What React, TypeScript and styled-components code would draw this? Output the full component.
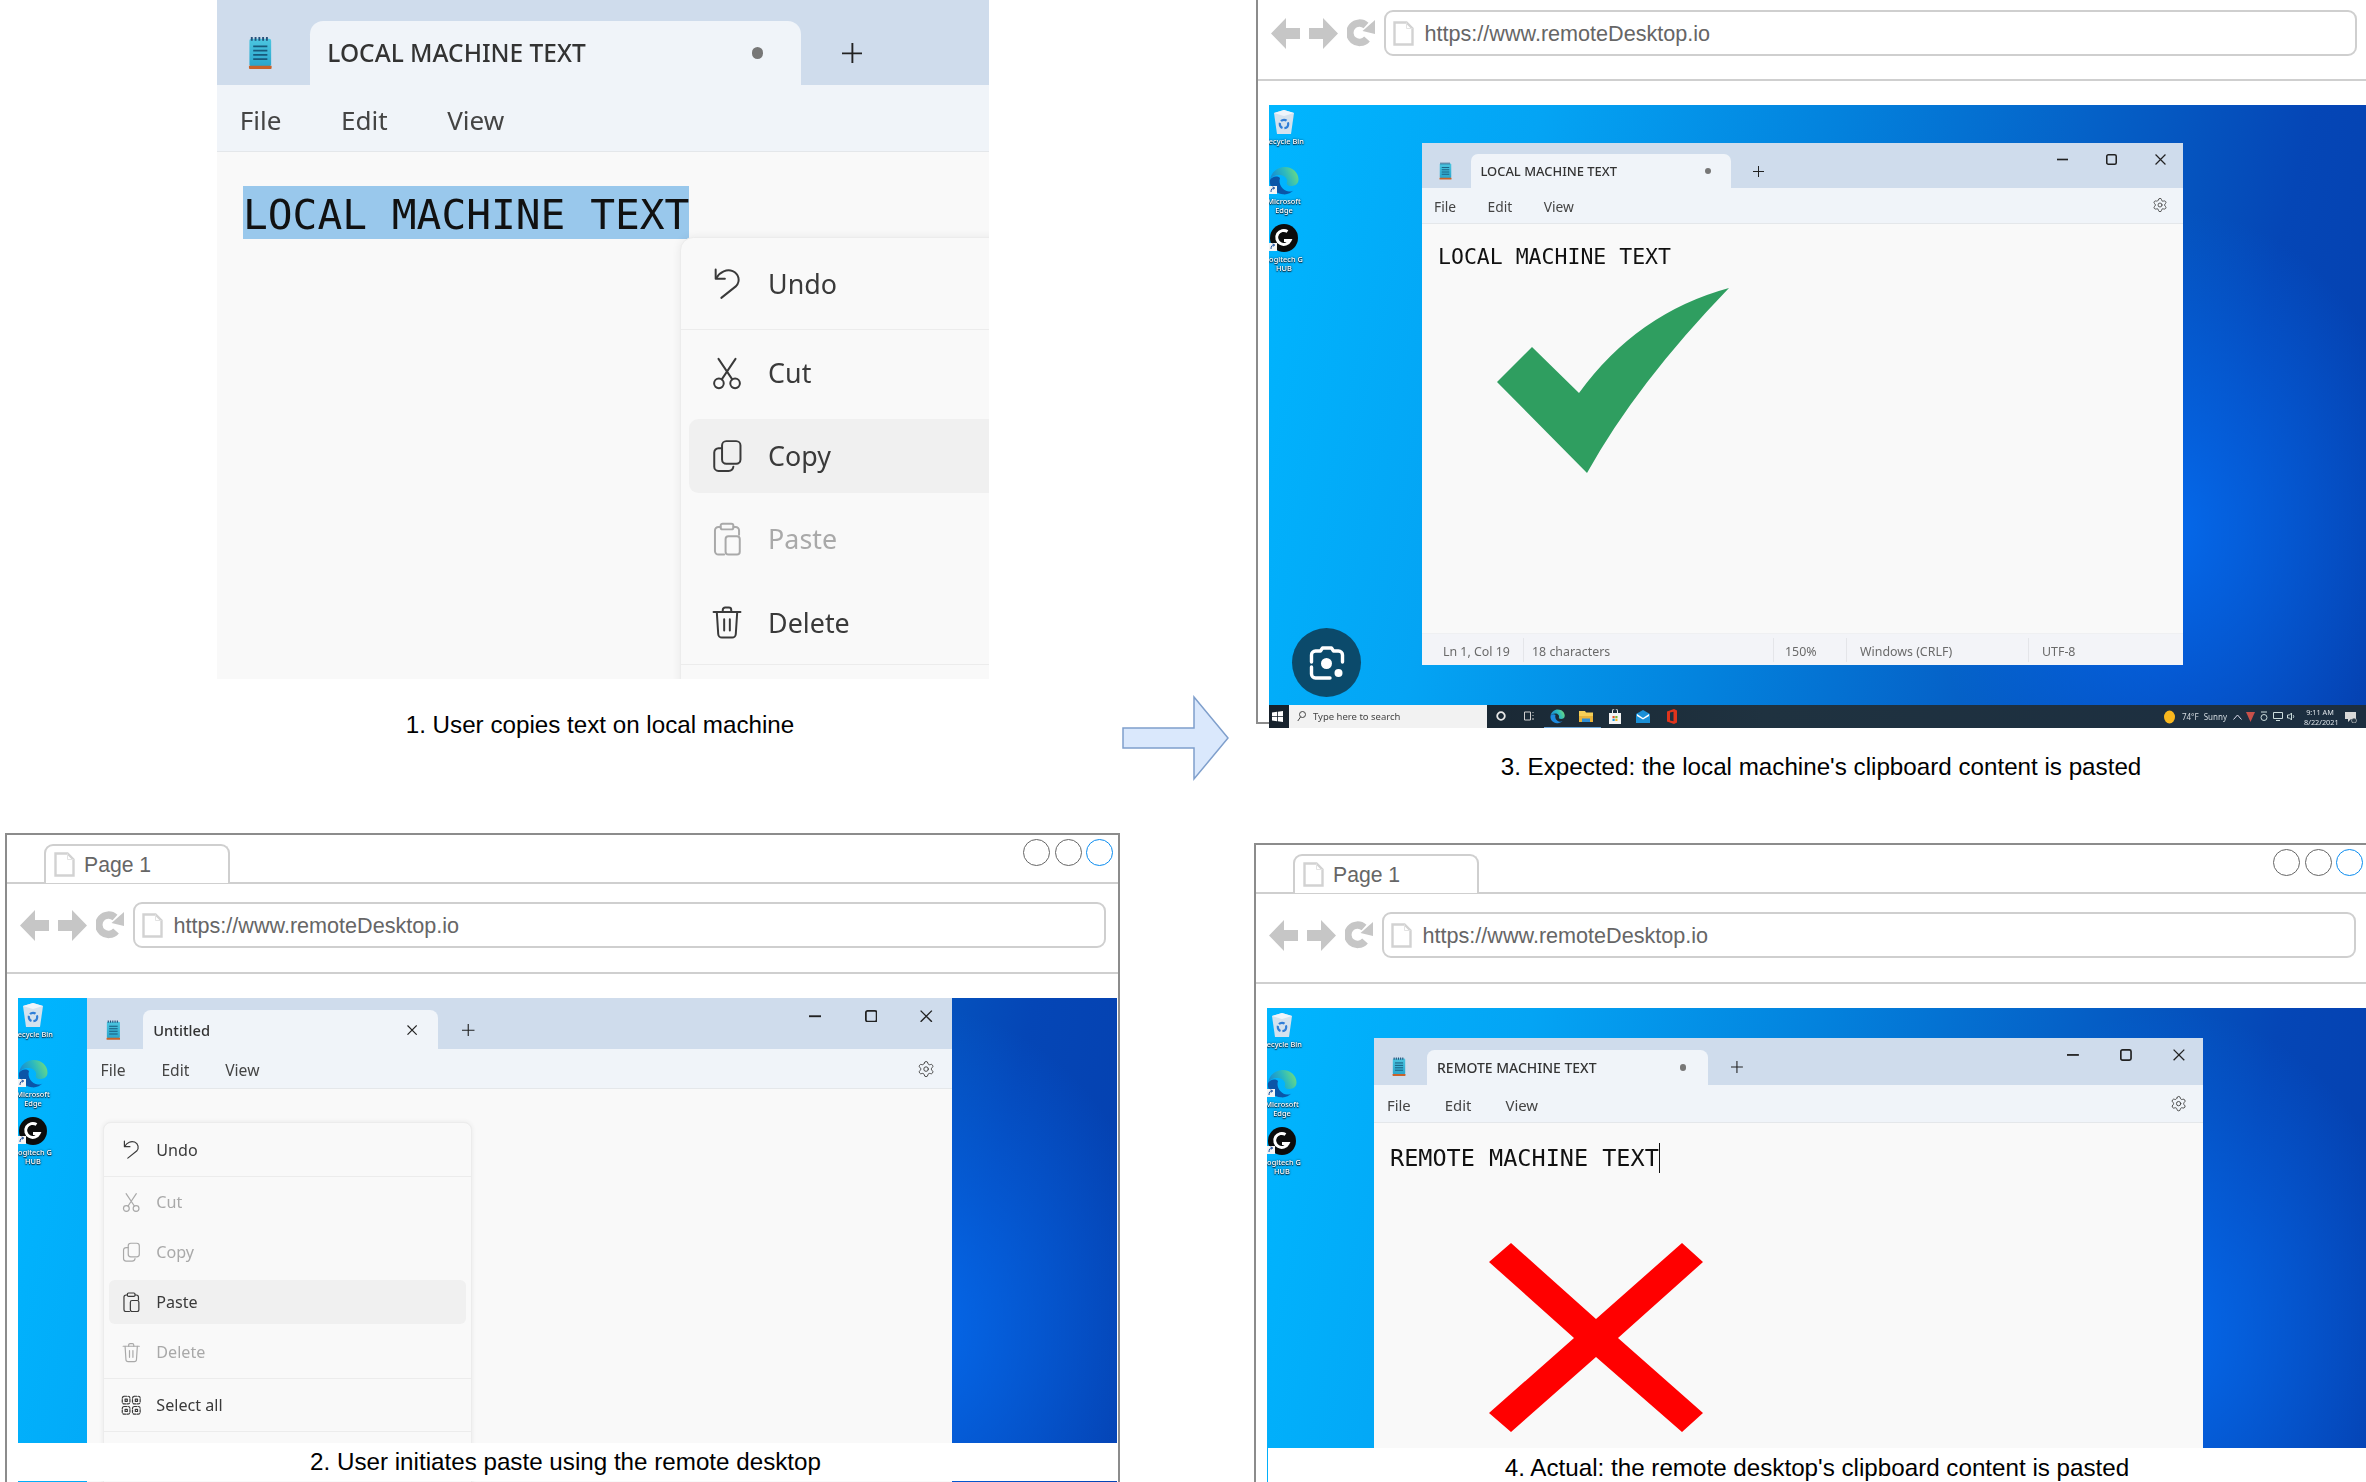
import React from "react";
import styled, { createGlobalStyle } from "styled-components";
import { Settings } from "lucide-react";

const Global = createGlobalStyle`
  html, body { margin: 0; padding: 0; background: #fff; }
  #root { width: 2366px; height: 1482px; overflow: hidden; }
`;

const SANS = `"Noto Sans", "Open Sans", sans-serif`;
const ARIAL = `"Liberation Sans", Arial, sans-serif`;

/* ---------- free canvas holding the four diagram steps ---------- */
const Canvas = styled.div`
  position: relative;
  width: 2366px;
  height: 1482px;
  overflow: hidden;
  background: #fff;
`;

const Caption = styled.div<{ $x: number; $y: number; $w: number; $h: number; $white?: boolean; $pr?: number; $pt?: number }>`
  position: absolute;
  left: ${(p) => p.$x}px;
  top: ${(p) => p.$y}px;
  width: ${(p) => p.$w}px;
  height: ${(p) => p.$h}px;
  box-sizing: border-box;
  padding: ${(p) => p.$pt ?? 0}px ${(p) => p.$pr ?? 0}px 0 0;
  display: flex;
  align-items: center;
  justify-content: center;
  background: ${(p) => (p.$white ? "#fff" : "transparent")};
  font: 24.2px ${ARIAL};
  color: #000;
  white-space: nowrap;
`;

const ArrowShape = styled.svg`
  position: absolute;
  left: 1121px;
  top: 695px;
`;

/* ---------- browser mock ---------- */
const Browser = styled.div<{ $x: number; $y: number; $w: number; $h: number; $open?: boolean }>`
  position: absolute;
  left: ${(p) => p.$x}px;
  top: ${(p) => p.$y}px;
  width: ${(p) => p.$w}px;
  height: ${(p) => p.$h}px;
  box-sizing: border-box;
  border: 2px solid #8c8c8c;
  border-top-width: ${(p) => (p.$open ? 0 : 2)}px;
  background: #fff;
  display: flex;
  flex-direction: column;
`;

const TabStrip = styled.div`
  flex: none;
  height: 49px;
  box-sizing: border-box;
  border-bottom: 2px solid #cfcfcf;
  padding: 4px 5px 0 37px;
  display: flex;
  align-items: flex-start;
  justify-content: space-between;
`;

const PageTab = styled.div`
  width: 186px;
  height: 39px;
  margin-top: 5px;
  box-sizing: border-box;
  border: 2px solid #cfcfcf;
  border-bottom: none;
  border-radius: 9px 9px 0 0;
  background: #fff;
  padding: 6px 0 0 8px;
  display: flex;
  align-items: flex-start;
  gap: 9px;
  font: 21.2px/25px ${ARIAL};
  color: #666;
`;

const Circles = styled.div`
  display: flex;
  gap: 4.5px;
`;

const Circle = styled.span<{ $blue?: boolean }>`
  width: 27px;
  height: 27px;
  box-sizing: border-box;
  border-radius: 50%;
  border: 1.5px solid ${(p) => (p.$blue ? "#0a8cf0" : "#666")};
`;

const AddressRow = styled.div<{ $compact?: boolean }>`
  flex: none;
  height: ${(p) => (p.$compact ? 81 : 90)}px;
  box-sizing: border-box;
  border-bottom: 2px solid #cfcfcf;
  padding: ${(p) => (p.$compact ? 10 : 18)}px 12px 0 13px;
  display: flex;
  align-items: flex-start;
`;

const NavGroup = styled.div`
  flex: none;
  display: flex;
  align-items: center;
  gap: 9px;
  height: 46px;
  margin-right: 9px;
`;

const AddressBar = styled.div`
  flex: 1;
  height: 46px;
  box-sizing: border-box;
  border: 2px solid #cfcfcf;
  border-radius: 9px;
  padding-left: 7px;
  display: flex;
  align-items: center;
  gap: 10.5px;
  font: 21.6px ${ARIAL};
  color: #666;
`;

const AddressText = styled.span`
  padding-top: 1px;
`;

const Viewport = styled.div`
  flex: 1;
  padding: 24px 1px 0 11px;
  min-height: 0;
`;

/* ---------- windows desktop ---------- */
const Desktop = styled.div<{ $h: number }>`
  position: relative;
  height: ${(p) => p.$h}px;
  overflow: hidden;
  filter: blur(0.35px);
  display: flex;
  flex-direction: column;
  background:
    radial-gradient(ellipse 250px 320px at 82% 68%, rgba(5, 108, 240, 0.9), rgba(5, 108, 240, 0) 100%),
    linear-gradient(103deg, #00b6ff 0%, #04a4f4 22%, #0382dd 46%, #0562c8 66%, #0546b6 84%, #053fae 100%);
`;

const IconColumn = styled.div`
  flex: none;
  width: 36px;
  margin-left: -3px;
  display: flex;
  flex-direction: column;
  align-items: center;
`;

const DeskItem = styled.div<{ $top: number }>`
  margin-top: ${(p) => p.$top}px;
  display: flex;
  flex-direction: column;
  align-items: center;
  font: 500 7.4px/9px ${SANS};
  color: #fff;
  text-align: center;
  white-space: nowrap;
  text-shadow: 0 0 2px #123, 0 1px 1px #123;
`;

const DeskLabel = styled.div<{ $top: number }>`
  margin-top: ${(p) => p.$top}px;
`;

const LensButton = styled.div`
  position: absolute;
  left: 23px;
  top: 523px;
  width: 69px;
  height: 69px;
  border-radius: 50%;
  background: #0b4a6b;
  display: flex;
  align-items: center;
  justify-content: center;
`;

const Taskbar = styled.div`
  margin-top: auto;
  flex: none;
  height: 23px;
  background: linear-gradient(90deg, #16212c, #1f3240 45%, #1c2e40);
  display: flex;
  align-items: center;
`;

const StartCell = styled.div`
  width: 20px;
  height: 23px;
  padding-right: 3px;
  box-sizing: border-box;
  display: flex;
  align-items: center;
  justify-content: center;
`;

const SearchBox = styled.div`
  width: 198px;
  height: 23px;
  box-sizing: border-box;
  background: #f2f2f2;
  padding-left: 8px;
  display: flex;
  align-items: center;
  gap: 7px;
  font: 9.5px ${SANS};
  color: #444;
`;

const TaskCell = styled.div<{ $active?: boolean }>`
  position: relative;
  width: 28.4px;
  height: 23px;
  display: flex;
  align-items: center;
  justify-content: center;
  box-sizing: border-box;
  border-bottom: 1.5px solid ${(p) => (p.$active ? "#6aa5d8" : "transparent")};
`;

const Tray = styled.div`
  margin-left: auto;
  padding-right: 11px;
  display: flex;
  align-items: center;
  height: 23px;
  color: #d4dbe0;
  font: 8px ${SANS};
`;

const TrayText = styled.span<{ $ml: number }>`
  margin-left: ${(p) => p.$ml}px;
  white-space: nowrap;
`;

const TrayClock = styled.div`
  margin: 0 9px 0 8px;
  width: 32px;
  text-align: center;
  font: 7.3px/10px ${SANS};
  color: #dde3e8;
`;

/* ---------- notepad window, every length scaled by --s (--v for bar heights) ---------- */
const Window = styled.div<{ $x: number; $y: number; $w: number; $h: number; $s: number; $v?: number; $blur?: boolean }>`
  --s: ${(p) => p.$s};
  --v: ${(p) => p.$v ?? p.$s};
  position: absolute;
  left: ${(p) => p.$x}px;
  top: ${(p) => p.$y}px;
  width: ${(p) => p.$w}px;
  height: ${(p) => p.$h}px;
  overflow: hidden;
  background: #f9f9f9;
  display: flex;
  flex-direction: column;
  font-family: ${SANS};
  filter: ${(p) => (p.$blur ? "blur(0.45px)" : "none")};
`;

const TitleBar = styled.div`
  flex: none;
  height: calc(var(--v) * 45px);
  box-sizing: border-box;
  background: #cfdcec;
  padding-left: calc(var(--s) * 16.5px);
  display: flex;
  align-items: flex-end;
`;

const NoteIcon = styled.svg`
  flex: none;
  width: calc(var(--s) * 13px);
  height: calc(var(--s) * 18px);
  margin: 0 calc(var(--s) * 19.5px) calc(var(--v) * 8px) 0;
`;

const DocTab = styled.div`
  flex: none;
  width: calc(var(--s) * 260px);
  height: calc(var(--v) * 34px);
  box-sizing: border-box;
  background: #f0f4f9;
  border-radius: calc(var(--s) * 7px) calc(var(--s) * 7px) 0 0;
  padding: 0 calc(var(--s) * 17px) 0 calc(var(--s) * 9.4px);
  display: flex;
  align-items: center;
  justify-content: space-between;
  font-size: calc(var(--s) * 12.95px);
  font-weight: 500;
  color: #333;
`;

const TabSlot = styled.span`
  width: calc(var(--s) * 12px);
  height: calc(var(--s) * 12px);
  display: flex;
  align-items: center;
  justify-content: center;
`;

const TabDot = styled.span`
  width: calc(var(--s) * 6px);
  height: calc(var(--s) * 6px);
  border-radius: 50%;
  background: #777;
`;

const ThinIcon = styled.svg<{ $size: number }>`
  flex: none;
  width: calc(var(--s) * ${(p) => p.$size}px);
  height: calc(var(--s) * ${(p) => p.$size}px);
  fill: none;
  stroke: #222;
  stroke-width: 1.2;
`;

const PlusCell = styled.div`
  flex: none;
  margin: 0 0 calc(var(--v) * 11.5px) calc(var(--s) * 21.5px);
  display: flex;
`;

const Controls = styled.div`
  margin: 0 calc(var(--s) * -2px) 0 auto;
  align-self: flex-start;
  display: flex;
`;

const ControlCell = styled.div`
  width: calc(var(--s) * 49px);
  height: calc(var(--v) * 32px);
  display: flex;
  align-items: center;
  justify-content: center;
`;

const MenuBar = styled.div`
  flex: none;
  height: calc(var(--v) * 35.5px);
  box-sizing: border-box;
  background: #f0f4f9;
  border-bottom: 1px solid #e4e7ea;
  padding: calc(var(--s) * 2.2px) calc(var(--s) * 15px) 0 calc(var(--s) * 12px);
  display: flex;
  align-items: center;
  gap: calc(var(--s) * 31.5px);
  font-size: calc(var(--s) * 13.8px);
  color: #444;
`;

const GearCell = styled.span`
  margin-left: auto;
  display: flex;
  color: #444;
  margin-top: calc(var(--s) * -2px);
  & > svg {
    width: calc(var(--s) * 16px);
    height: calc(var(--s) * 16px);
  }
`;

const Editor = styled.div<{ $pt: number; $pl: number }>`
  flex: 1;
  min-height: 0;
  padding: ${(p) => p.$pt}px 0 0 ${(p) => p.$pl}px;
`;

const Typed = styled.span<{ $size: number; $lh: number; $nudge?: number; $selected?: boolean; $caret?: boolean }>`
  display: inline-block;
  font-family: "DejaVu Sans Mono", "Liberation Mono", monospace;
  font-size: ${(p) => p.$size}px;
  line-height: ${(p) => p.$lh - (p.$nudge ?? 0)}px;
  padding-top: ${(p) => p.$nudge ?? 0}px;
  color: #111;
  white-space: pre;
  background: ${(p) => (p.$selected ? "#99c8ec" : "transparent")};
  border-right: ${(p) => (p.$caret ? "1.5px solid #111" : "none")};
`;

const StatusBar = styled.div`
  flex: none;
  height: 32px;
  box-sizing: border-box;
  background: #f3f4f8;
  border-top: 1px solid #eff0f2;
  display: flex;
  align-items: center;
  font-size: 12.4px;
  color: #6a6a6a;
`;

const StatusCell = styled.div<{ $w: number; $pl: number; $rule?: boolean }>`
  width: ${(p) => p.$w}px;
  height: 24px;
  box-sizing: border-box;
  padding: 3px 0 0 ${(p) => p.$pl}px;
  display: flex;
  align-items: center;
  border-right: ${(p) => (p.$rule ? "1px solid #e4e5e9" : "none")};
`;

const Verdict = styled.svg<{ $x: number; $y: number }>`
  position: absolute;
  left: ${(p) => p.$x}px;
  top: ${(p) => p.$y}px;
`;

/* ---------- context menu ---------- */
const Menu = styled.div<{ $x: number; $y: number; $w: number }>`
  position: absolute;
  left: ${(p) => p.$x}px;
  top: ${(p) => p.$y}px;
  width: ${(p) => p.$w}px;
  box-sizing: border-box;
  background: #f9f9f9;
  border: 1px solid #ececec;
  border-radius: calc(var(--s) * 7px);
  box-shadow: 0 0 calc(var(--s) * 5px) rgba(0, 0, 0, 0.07);
  padding-bottom: 400px;
`;

const MenuRow = styled.div<{ $hot?: boolean; $off?: boolean; $h: number; $rule?: boolean; $mt?: number }>`
  height: calc(var(--s) * ${(p) => p.$h}px);
  margin-top: calc(var(--s) * ${(p) => p.$mt ?? 0}px);
  box-sizing: border-box;
  display: flex;
  align-items: center;
  color: ${(p) => (p.$off ? "#a9a9a9" : "#3a3a3a")};
  font-size: calc(var(--s) * 14.2px);
  padding-left: calc(var(--s) * 15.3px);
  gap: calc(var(--s) * 12.8px);
  position: relative;
  border-bottom: ${(p) => (p.$rule ? "1.5px solid #ececec" : "none")};
  &::before {
    content: "";
    display: ${(p) => (p.$hot ? "block" : "none")};
    position: absolute;
    left: calc(var(--s) * 4.3px);
    right: calc(var(--s) * 4.3px);
    top: calc(var(--s) * 2.5px);
    bottom: calc(var(--s) * 2.5px);
    border-radius: calc(var(--s) * 5px);
    background: #f0f0f0;
  }
  & > * {
    position: relative;
  }
`;

const MenuGlyph = styled.svg`
  flex: none;
  width: calc(var(--s) * 18px);
  height: calc(var(--s) * 18px);
  fill: none;
  stroke: currentColor;
  stroke-width: 1.4;
  stroke-linecap: round;
  stroke-linejoin: round;
`;

/* ---------- drawings ---------- */
const NotepadGlyph = () => (
  <NoteIcon viewBox="0 0 26 36">
    <defs>
      <linearGradient id="npBody" x1="0" x2="0" y1="0" y2="1">
        <stop offset="0" stopColor="#4cc6e0" />
        <stop offset="1" stopColor="#2aa5cc" />
      </linearGradient>
    </defs>
    <rect x="1.5" y="3" width="23" height="29" rx="2" fill="url(#npBody)" />
    <path d="M4 1v4M8 1v4M12 1v4M16 1v4M20 1v4" stroke="#24507a" strokeWidth="2" />
    <path d="M5.5 11h15M5.5 15.5h15M5.5 20h15M5.5 24.5h15" stroke="#175a7c" strokeWidth="1.8" />
    <path d="M1 31.5h24v2.5a1 1 0 0 1-1 1H2a1 1 0 0 1-1-1z" fill="#c8622a" />
  </NoteIcon>
);

const XGlyph = ({ size }: { size: number }) => (
  <ThinIcon $size={size} viewBox="0 0 10 10">
    <path d="M.5.5l9 9M9.5.5l-9 9" strokeWidth="1.1" />
  </ThinIcon>
);

const PlusGlyph = () => (
  <ThinIcon $size={11} viewBox="0 0 11 11">
    <path d="M5.5 0v11M0 5.5h11" strokeWidth="1" />
  </ThinIcon>
);

const WindowControls = () => (
  <Controls>
    <ControlCell>
      <ThinIcon $size={11} viewBox="0 0 10 10">
        <path d="M0 5h10" strokeWidth="1.5" />
      </ThinIcon>
    </ControlCell>
    <ControlCell>
      <ThinIcon $size={11} viewBox="0 0 10 10">
        <rect x=".7" y=".7" width="8.6" height="8.6" rx="1.4" strokeWidth="1.4" />
      </ThinIcon>
    </ControlCell>
    <ControlCell>
      <XGlyph size={11} />
    </ControlCell>
  </Controls>
);

const UndoIcon = () => (
  <MenuGlyph viewBox="0 0 24 24">
    <path d="M4 2.5V9h6.5" />
    <path d="M4.5 8.5C7 4 12 2 16 3.6c4.4 1.9 5.6 7 2.4 10.6L8 22.5" />
  </MenuGlyph>
);
const CutIcon = () => (
  <MenuGlyph viewBox="0 0 24 24">
    <circle cx="6.3" cy="19.3" r="3.4" />
    <circle cx="17.7" cy="19.3" r="3.4" />
    <path d="M8.3 16.5 18 2M15.7 16.5 6 2" />
  </MenuGlyph>
);
const CopyIcon = () => (
  <MenuGlyph viewBox="0 0 24 24">
    <rect x="8.5" y="1.5" width="13" height="16" rx="3" />
    <path d="M8.5 6.5H6A3 3 0 0 0 3 9.5v10a3 3 0 0 0 3 3h7a3.5 3.5 0 0 0 3.5-3" />
  </MenuGlyph>
);
const PasteIcon = () => (
  <MenuGlyph viewBox="0 0 24 24">
    <rect x="7.5" y="1.2" width="9" height="4" rx="1.4" />
    <path d="M7.5 3.5H6A2.5 2.5 0 0 0 3.5 6v14.5A2.5 2.5 0 0 0 6 23h4" />
    <path d="M16.5 3.5H18A2.5 2.5 0 0 1 20.5 6v3" />
    <rect x="11" y="10" width="10" height="13" rx="2" />
  </MenuGlyph>
);
const DeleteIcon = () => (
  <MenuGlyph viewBox="0 0 24 24">
    <path d="M2.5 5h19" />
    <path d="M9 5V3.5A1.7 1.7 0 0 1 10.7 1.8h2.6A1.7 1.7 0 0 1 15 3.5V5" />
    <path d="M4.8 5l1 15.5A2.6 2.6 0 0 0 8.4 23h7.2a2.6 2.6 0 0 0 2.6-2.5L19.2 5" />
    <path d="M10 10v8M14 10v8" />
  </MenuGlyph>
);
const SelectAllIcon = () => (
  <MenuGlyph viewBox="0 0 24 24">
    <rect x="1.5" y="1.5" width="9" height="9" rx="2.2" strokeDasharray="3 1.6" />
    <rect x="13.5" y="1.5" width="9" height="9" rx="2.2" strokeDasharray="3 1.6" />
    <rect x="1.5" y="13.5" width="9" height="9" rx="2.2" strokeDasharray="3 1.6" />
    <rect x="13.5" y="13.5" width="9" height="9" rx="2.2" strokeDasharray="3 1.6" />
    <rect x="4.8" y="4.8" width="2.6" height="2.6" />
    <rect x="16.8" y="4.8" width="2.6" height="2.6" />
    <rect x="4.8" y="16.8" width="2.6" height="2.6" />
    <rect x="16.8" y="16.8" width="2.6" height="2.6" />
  </MenuGlyph>
);

const DocIcon = () => (
  <svg width="21" height="25" viewBox="0 0 21 25" style={{ flex: "none" }}>
    <path d="M1.5 1.5h12l6 6v16h-18z" fill="#fff" stroke="#d2d2d2" strokeWidth="2.4" />
    <path d="M13.5 1.5v6h6" fill="none" stroke="#e3e3e3" strokeWidth="1" />
  </svg>
);

const NavIcons = () => (
  <NavGroup>
    <svg width="29" height="31" viewBox="0 0 29 31">
      <path d="M0 15.5 15 0v10h14v11H15v10z" fill="#c6c6c6" />
    </svg>
    <svg width="29" height="31" viewBox="0 0 29 31">
      <path d="M29 15.5 14 0v10H0v11h14v10z" fill="#c6c6c6" />
    </svg>
    <svg width="28" height="30" viewBox="0 0 28 30">
      <path d="M20 21A9.7 9.7 0 1 1 19 7.5" fill="none" stroke="#c6c6c6" strokeWidth="7.4" />
      <path d="M15.5 13 28 16V2z" fill="#c6c6c6" />
    </svg>
  </NavGroup>
);

const RecycleBin = () => (
  <svg width="24" height="26" viewBox="0 0 24 26">
    <path d="M2 4 12 1l10 3-3 21H5z" fill="#d4e2ee" />
    <path d="M2 4l10 3 10-3-10-3z" fill="#eef5fb" />
    <circle cx="12" cy="15" r="4.2" fill="none" stroke="#2f7ed8" strokeWidth="2.2" strokeDasharray="6 2" />
  </svg>
);

const Shortcut = () => (
  <>
    <rect x="0" y="19" width="8" height="8" fill="#f4f4f4" />
    <path d="M2 25c0-3 1-4 3-4M3.6 19.8 5.8 21l-2 1.4" fill="none" stroke="#1a4fa0" strokeWidth="1" />
  </>
);

const EdgeLogo = () => (
  <svg width="30" height="28" viewBox="0 0 30 28">
    <defs>
      <linearGradient id="edgeTop" x1="0" x2="1" y1="0.6" y2="0.3">
        <stop offset="0" stopColor="#1586d4" />
        <stop offset="0.55" stopColor="#2bb8c0" />
        <stop offset="1" stopColor="#6fdc7f" />
      </linearGradient>
    </defs>
    <path d="M1 13C2 5 9 0 15.500 0 24 0 29.500 6 29.500 12.500c0 4.500-3.500 6.500-7.500 6.500-3.500 0-5-2-4-4 1-3-2.500-7-7-7C6 8 2 10 1 13z" fill="url(#edgeTop)" />
    <path d="M1 13c2-3.500 7-4.500 10-2-2 6 2.500 13 9 13.500 2 .2 3.500-.3 5-1.500-3 3.200-7 4.800-11 4.300C6 26.500 0 21 1 13z" fill="#0b55a8" />
    <Shortcut />
  </svg>
);

const LogiLogo = () => (
  <svg width="30" height="28" viewBox="0 0 30 28">
    <circle cx="15" cy="14" r="14" fill="#0c0c0c" />
    <path d="M18.500 7.500A7 7 0 1 0 21 16.500h-6" fill="none" stroke="#fff" strokeWidth="3" />
    <Shortcut />
  </svg>
);

const DesktopIcons = () => (
  <IconColumn>
    <DeskItem $top={4}>
      <RecycleBin />
      <DeskLabel $top={2}>Recycle Bin</DeskLabel>
    </DeskItem>
    <DeskItem $top={20.5}>
      <EdgeLogo />
      <DeskLabel $top={2.5}>Microsoft</DeskLabel>
      <div>Edge</div>
    </DeskItem>
    <DeskItem $top={9}>
      <LogiLogo />
      <DeskLabel $top={2.5}>Logitech G</DeskLabel>
      <div>HUB</div>
    </DeskItem>
  </IconColumn>
);

const LensIcon = () => (
  <svg width="36" height="36" viewBox="0 0 36 36" fill="none" stroke="#fff" strokeWidth="3.4" strokeLinecap="round" strokeLinejoin="round">
    <path d="M2.500 17V10a4 4 0 0 1 4-4h5l2-3h9l2 3h5a4 4 0 0 1 4 4v7" />
    <path d="M2.500 22v7a4 4 0 0 0 4 4H21" />
    <circle cx="17.500" cy="18.500" r="5.500" fill="#fff" stroke="none" />
    <circle cx="29.500" cy="28" r="4" fill="#fff" stroke="none" />
  </svg>
);

const TaskbarRow = () => (
  <Taskbar>
    <StartCell>
      <svg width="11" height="11" viewBox="0 0 11 11">
        <path d="M0 1.500 5 .8v4.400H0zM5.800.7 11 0v5.200H5.800zM0 5.900h5v4.400L0 9.600zM5.800 5.900H11V11l-5.200-.7z" fill="#fff" />
      </svg>
    </StartCell>
    <SearchBox>
      <svg width="9" height="11" viewBox="0 0 9 11" fill="none" stroke="#444" strokeWidth="1">
        <circle cx="5.500" cy="3.500" r="3" />
        <path d="M3.500 6 .8 10" />
      </svg>
      Type here to search
    </SearchBox>
    <TaskCell>
      <svg width="10" height="10" viewBox="0 0 10 10" fill="none" stroke="#e8e8e8" strokeWidth="1.8"><circle cx="5" cy="5" r="3.800" /></svg>
    </TaskCell>
    <TaskCell>
      <svg width="11" height="10" viewBox="0 0 11 10" fill="none" stroke="#d0d0d0" strokeWidth="1"><path d="M.5 1h6v8h-6zM9 1v1M9 4v1M9 7v2" /></svg>
    </TaskCell>
    <TaskCell $active>
      <svg width="15" height="15" viewBox="0 0 30 28"><path d="M1 13C2 5 9 0 15.500 0 24 0 29.500 6 29.500 12.500c0 4.500-3.500 6.500-7.500 6.500-3.500 0-5-2-4-4 1-3-2.500-7-7-7C6 8 2 10 1 13z" fill="url(#edgeTop)" /><path d="M1 13c2-3.500 7-4.500 10-2-2 6 2.500 13 9 13.500 2 .2 3.500-.3 5-1.500-3 3.200-7 4.800-11 4.300C6 26.500 0 21 1 13z" fill="#1c8ae0" /></svg>
    </TaskCell>
    <TaskCell $active>
      <svg width="14" height="13" viewBox="0 0 14 13"><path d="M0 1h6l1 1.500h7V12H0z" fill="#f6cf57" /><path d="M0 6h14v6H0z" fill="#e9b33a" /><path d="M3 8.500h8V12H3z" fill="#2c8fd8" /></svg>
    </TaskCell>
    <TaskCell>
      <svg width="12" height="15" viewBox="0 0 12 15"><path d="M0 4h12v11H0z" fill="#f4f4f4" /><path d="M3.500 5V2a2.500 2.500 0 0 1 5 0v3" fill="none" stroke="#eee" strokeWidth="1" /><path d="M3.500 7h2.200v2.200H3.500z" fill="#e8542c" /><path d="M6.300 7h2.200v2.200H6.300z" fill="#7cb82f" /><path d="M3.500 9.800h2.200V12H3.500z" fill="#1c9be0" /><path d="M6.300 9.800h2.200V12H6.300z" fill="#f6b81e" /></svg>
    </TaskCell>
    <TaskCell>
      <svg width="14" height="13" viewBox="0 0 14 13"><path d="M0 4 7 0l7 4v9H0z" fill="#1a8fd6" /><path d="M1 4l6 4 6-4v2L7 9.500 1 6z" fill="#fff" /></svg>
    </TaskCell>
    <TaskCell>
      <svg width="11" height="15" viewBox="0 0 11 15"><path d="M1 2.500 8 0l3 1.500v12L8 15l-7-2.500z" fill="#e0341c" /><path d="M4 3.500 7.500 2.800v9.400L4 11.500z" fill="#1f2f3d" /></svg>
    </TaskCell>
    <Tray>
      <svg width="11" height="14" viewBox="0 0 11 14"><ellipse cx="5.500" cy="7" rx="5.500" ry="6.500" fill="#f8b71e" /></svg>
      <TrayText $ml={7}>74°F</TrayText>
      <TrayText $ml={5}>Sunny</TrayText>
      <svg style={{ marginLeft: 6 }} width="9" height="6" viewBox="0 0 9 6" fill="none" stroke="#dde" strokeWidth="1"><path d="M.5 5.500 4.500 1l4 4.500" /></svg>
      <svg style={{ marginLeft: 4 }} width="9" height="10" viewBox="0 0 9 10"><path d="M0 0h9L4.500 10z" fill="#c8504a" /></svg>
      <svg style={{ marginLeft: 5 }} width="8" height="11" viewBox="0 0 8 11" fill="none" stroke="#cdd" strokeWidth="1"><path d="M1 1h6" /><circle cx="4" cy="6.500" r="3" /></svg>
      <svg style={{ marginLeft: 5 }} width="10" height="9" viewBox="0 0 10 9" fill="none" stroke="#cdd" strokeWidth="1"><path d="M.5.500h9v6h-9zM3 8.500h4" /></svg>
      <svg style={{ marginLeft: 4 }} width="9" height="9" viewBox="0 0 9 9" fill="none" stroke="#cdd" strokeWidth="1"><path d="M.5 3h2l2-2v7l-2-2h-2zM6 3c1 1 1 2 0 3" /></svg>
      <TrayClock>
        9:11 AM
        <br />
        8/22/2021
      </TrayClock>
      <svg width="12" height="12" viewBox="0 0 12 12"><path d="M0 1h11v7H6L3 11V8H0z" fill="#d8d8d8" /><circle cx="9" cy="9.500" r="2.500" fill="#2a3a48" stroke="#ddd" strokeWidth=".6" /></svg>
    </Tray>
  </Taskbar>
);

const PageControls = () => (
  <TabStrip>
    <PageTab>
      <DocIcon />
      <span>Page 1</span>
    </PageTab>
    <Circles>
      <Circle />
      <Circle />
      <Circle $blue />
    </Circles>
  </TabStrip>
);

const AddressLine = ({ compact }: { compact?: boolean }) => (
  <AddressRow $compact={compact}>
    <NavIcons />
    <AddressBar>
      <DocIcon />
      <AddressText>https://www.remoteDesktop.io</AddressText>
    </AddressBar>
  </AddressRow>
);

const NotepadHead = ({ title, close, controls = true }: { title: string; close?: boolean; controls?: boolean }) => (
  <>
    <TitleBar>
      <NotepadGlyph />
      <DocTab>
        <span>{title}</span>
        <TabSlot>{close ? <XGlyph size={9} /> : <TabDot />}</TabSlot>
      </DocTab>
      <PlusCell>
        <PlusGlyph />
      </PlusCell>
      {controls && <WindowControls />}
    </TitleBar>
    <MenuBar>
      <span>File</span>
      <span>Edit</span>
      <span>View</span>
      {controls && (
        <GearCell>
          <Settings strokeWidth={1.3} />
        </GearCell>
      )}
    </MenuBar>
  </>
);

export default function App() {
  return (
    <Canvas>
      <Global />

      {/* step 1 */}
      <Window $x={217} $y={0} $w={772} $h={679} $s={1.89} $blur>
        <NotepadHead title="LOCAL MACHINE TEXT" controls={false} />
        <Editor $pt={34} $pl={26}>
          <Typed $size={41.2} $lh={53} $nudge={6} $selected>
            LOCAL MACHINE TEXT
          </Typed>
        </Editor>
        <Menu $x={463} $y={237} $w={400}>
          <MenuRow $h={48.5} $rule>
            <UndoIcon />
            <span>Undo</span>
          </MenuRow>
          <MenuRow $h={44} $mt={0.7}>
            <CutIcon />
            <span>Cut</span>
          </MenuRow>
          <MenuRow $h={44} $hot>
            <CopyIcon />
            <span>Copy</span>
          </MenuRow>
          <MenuRow $h={44} $off>
            <PasteIcon />
            <span>Paste</span>
          </MenuRow>
          <MenuRow $h={45} $rule>
            <DeleteIcon />
            <span>Delete</span>
          </MenuRow>
        </Menu>
      </Window>
      <Caption $x={214} $y={705} $w={772} $h={40}>
        1. User copies text on local machine
      </Caption>

      {/* arrow between steps */}
      <ArrowShape width="110" height="88" viewBox="0 0 110 88">
        <path d="M2 33h71V2l34 41-34 41V53H2z" fill="#dae8fc" stroke="#7f9fcc" strokeWidth="1.500" />
      </ArrowShape>

      {/* step 3 */}
      <Browser $x={1256} $y={0} $w={1115} $h={724} $open>
        <AddressLine compact />
        <Viewport>
          <Desktop $h={623}>
            <DesktopIcons />
            <LensButton>
              <LensIcon />
            </LensButton>
            <Window $x={153} $y={38} $w={761} $h={522} $s={1}>
              <NotepadHead title="LOCAL MACHINE TEXT" />
              <Editor $pt={19} $pl={16}>
                <Typed $size={21.5} $lh={28}>
                  LOCAL MACHINE TEXT
                </Typed>
              </Editor>
              <StatusBar>
                <StatusCell $w={102} $pl={21} $rule>Ln 1, Col 19</StatusCell>
                <StatusCell $w={250} $pl={8} $rule>18 characters</StatusCell>
                <StatusCell $w={73} $pl={11} $rule>150%</StatusCell>
                <StatusCell $w={182} $pl={13} $rule>Windows (CRLF)</StatusCell>
                <StatusCell $w={120} $pl={13}>UTF-8</StatusCell>
              </StatusBar>
              <Verdict $x={75} $y={145} width="232" height="185" viewBox="0 0 232 185">
                <path d="M0 94 35 59 82 105Q140 25 232 0 140 95 90 185z" fill="#2f9e60" />
              </Verdict>
            </Window>
            <TaskbarRow />
          </Desktop>
        </Viewport>
      </Browser>
      <Caption $x={1400} $y={747} $w={842} $h={40}>
        3. Expected: the local machine's clipboard content is pasted
      </Caption>

      {/* step 2 */}
      <Browser $x={5} $y={833} $w={1115} $h={660}>
        <PageControls />
        <AddressLine />
        <Viewport>
          <Desktop $h={484}>
            <DesktopIcons />
            <Window $x={69} $y={0} $w={865} $h={484} $s={1.135}>
              <NotepadHead title="Untitled" close />
              <Editor $pt={0} $pl={0} />
              <Menu $x={16} $y={124} $w={369}>
                <MenuRow $h={47.6} $rule>
                  <UndoIcon />
                  <span>Undo</span>
                </MenuRow>
                <MenuRow $h={44} $off>
                  <CutIcon />
                  <span>Cut</span>
                </MenuRow>
                <MenuRow $h={44} $off>
                  <CopyIcon />
                  <span>Copy</span>
                </MenuRow>
                <MenuRow $h={44} $hot>
                  <PasteIcon />
                  <span>Paste</span>
                </MenuRow>
                <MenuRow $h={46} $off $rule>
                  <DeleteIcon />
                  <span>Delete</span>
                </MenuRow>
                <MenuRow $h={46.5} $rule>
                  <SelectAllIcon />
                  <span>Select all</span>
                </MenuRow>
              </Menu>
            </Window>
          </Desktop>
        </Viewport>
      </Browser>
      <Caption $x={18} $y={1443} $w={1099} $h={38} $white $pr={4}>
        2. User initiates paste using the remote desktop
      </Caption>

      {/* step 4 */}
      <Browser $x={1254} $y={843} $w={1116} $h={660}>
        <PageControls />
        <AddressLine />
        <Viewport>
          <Desktop $h={474}>
            <DesktopIcons />
            <Window $x={107} $y={30} $w={829} $h={444} $s={1.08} $v={1.05}>
              <NotepadHead title="REMOTE MACHINE TEXT" />
              <Editor $pt={20} $pl={16}>
                <Typed $size={23.5} $lh={30} $caret>
                  REMOTE MACHINE TEXT
                </Typed>
              </Editor>
              <Verdict $x={115} $y={205} width="214" height="189" viewBox="0 0 214 189">
                <path d="M22 0l85 76 86-76 21 19-85 76 85 75-21 19-86-75-85 75-22-19 85-75L0 19z" fill="#f00" />
              </Verdict>
            </Window>
          </Desktop>
        </Viewport>
      </Browser>
      <Caption $x={1268} $y={1448} $w={1098} $h={34} $white $pt={6}>
        4. Actual: the remote desktop's clipboard content is pasted
      </Caption>
    </Canvas>
  );
}
